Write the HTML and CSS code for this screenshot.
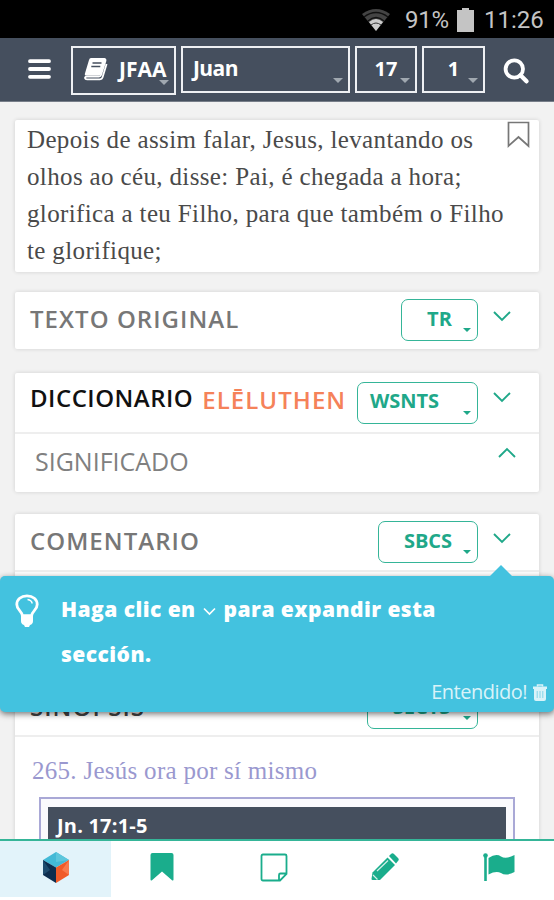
FILE: index.html
```html
<!DOCTYPE html>
<html lang="es">
<head>
    <meta charset="UTF-8">
    <meta name="viewport" content="width=device-width, initial-scale=1.0">
    <title>Juan 17:1</title>
    <link rel="stylesheet" href="styles.css">
</head>
<body>
    <div class="status-bar">
        <svg class="wifi" width="30" height="24" viewBox="0 0 30 24">
            <path d="M1 6Q15 -4 29 6L15 23Z" fill="#444"/>
            <path d="M3 9Q15 0 27 9M7 13Q15 6 23 13" fill="none" stroke="#111" stroke-width="1.3"/>
            <path d="M8 14Q15 8 22 14L15 23Z" fill="#ccc"/>
            <path d="M10 17Q15 13 20 17" fill="none" stroke="#333" stroke-width="1"/>
        </svg>
        <span class="percent">91%</span>
        <svg class="battery" width="17" height="24" viewBox="0 0 17 24">
            <path d="M5 0h7v2h5v22H0V2h5z" fill="#c4c4c4"/>
        </svg>
        <span class="clock">11:26</span>
    </div>

    <header class="toolbar">
        <svg class="menu" width="23" height="20" viewBox="0 0 23 20">
            <path d="M2 2.2h19M2 10h19M2 17.8h19" stroke="#fff" stroke-width="3.8" stroke-linecap="round"/>
        </svg>
        <div class="select version">
            <svg width="25" height="23" viewBox="0 0 25 23">
                <path d="M8 1H21Q23 1 22.4 3L18 17Q17.500 18.500 16 18.500H4Q2 18.500 2 20Q2.300 21.300 4 21.300H17Q19 21.300 19.500 19.500L23.600 6" fill="none" stroke="#fff" stroke-width="1.8"/>
                <path d="M8 0H20.500Q23 0 22.300 2.500L18 16Q17.500 17.500 15.500 17.500H3Q1.500 17.500 1.800 16L6 2Q6.500 0 8 0Z" fill="#fff"/>
                <path d="M9.500 5h9M8.300 8.600h9" stroke="#454f5e" stroke-width="1.5"/>
            </svg>
            <span>JFAA</span>
        </div>
        <div class="select book"><span>Juan</span></div>
        <div class="select chapter"><span>17</span></div>
        <div class="select verse-no"><span>1</span></div>
        <svg class="search" width="27" height="27" viewBox="0 0 27 27">
            <circle cx="11.300" cy="11" r="8.700" fill="none" stroke="#fff" stroke-width="3.800"/>
            <path d="M17.500 17.300l6 6" stroke="#fff" stroke-width="4.400" stroke-linecap="round"/>
        </svg>
    </header>

    <main>
        <section class="card verse">
            <p>Depois de assim falar, Jesus, levantando os<br>
            olhos ao céu, disse: Pai, é chegada a hora;<br>
            glorifica a teu Filho, para que também o Filho<br>
            te glorifique;</p>
            <svg class="ribbon" width="23" height="27" viewBox="0 0 23 27">
                <path d="M1.500 1.500h20v23.500l-10-9-10 9z" fill="none" stroke="#777" stroke-width="1.700"/>
            </svg>
        </section>

        <section class="card original">
            <div class="card-head">
                <h2>TEXTO ORIGINAL</h2>
                <div class="pick tr"><span>TR</span></div>
                <svg class="chev" width="18" height="11" viewBox="0 0 18 11"><path d="M1 1l8 8 8-8"/></svg>
            </div>
        </section>

        <section class="card dictionary">
            <div class="card-head">
                <h2 class="dark">DICCIONARIO</h2>
                <h2 class="word">ELĒLUTHEN</h2>
                <div class="pick wsnts"><span>WSNTS</span></div>
                <svg class="chev" width="18" height="11" viewBox="0 0 18 11"><path d="M1 1l8 8 8-8"/></svg>
            </div>
            <div class="sub-head">
                <h3>SIGNIFICADO</h3>
                <svg class="chev" width="18" height="11" viewBox="0 0 18 11"><path d="M1 10l8-8 8 8"/></svg>
            </div>
        </section>

        <section class="card comment">
            <div class="card-head">
                <h2>COMENTARIO</h2>
                <div class="pick sbcs"><span>SBCS</span></div>
                <svg class="chev" width="18" height="11" viewBox="0 0 18 11"><path d="M1 1l8 8 8-8"/></svg>
            </div>
        </section>

        <section class="card synopsis">
            <div class="card-head">
                <h2>SINOPSIS</h2>
                <div class="pick sects"><span>SECTS</span></div>
            </div>
            <h4>265. Jesús ora por sí mismo</h4>
            <div class="passage">
                <div class="passage-ref">Jn. 17:1-5</div>
            </div>
        </section>
    </main>

    <div class="tip">
        <svg class="bulb" width="24" height="34" viewBox="0 0 24 34">
            <path d="M7.500 22C7 17 1.800 16 1.800 10.500C1.800 5.500 6 1.800 12 1.800S22.200 5.500 22.200 10.500C22.200 16 17 17 16.500 22Z" fill="none" stroke="#fff" stroke-width="2.800"/>
            <path d="M12.500 5.500q4 .5 4.800 4" fill="none" stroke="#fff" stroke-width="1.300"/>
            <path d="M6 20.500h12v6.500q0 3-3 4l-1 2h-4l-1-2q-3-1-3-4z" fill="#fff"/>
        </svg>
        <p>Haga clic en<svg width="13" height="9" viewBox="0 0 13 9"><path d="M1 1.500l5.500 5.500 5.500-5.500" fill="none" stroke="#fff" stroke-width="1.700"/></svg>para expandir esta<br>sección.</p>
        <div class="dismiss">
            <span>Entendido!</span>
            <svg width="14" height="17" viewBox="0 0 14 17">
                <path d="M4.500 2.500V1h5v1.500" fill="none" stroke="#d9f3f9" stroke-width="1.500"/>
                <path d="M0 2.500h14v2.500H0zM1 5h12v10q0 2-2 2H3q-2 0-2-2z" fill="#d9f3f9"/>
                <path d="M4.200 7v7M7 7v7M9.800 7v7" stroke="#84d6e8" stroke-width="1"/>
            </svg>
        </div>
    </div>

    <nav class="tabs">
        <a class="active">
            <svg width="26" height="31" viewBox="0 0 26 31">
                <path d="M13 0L26 8L13 15.500L0 8Z" fill="#43b9d6"/>
                <path d="M13 0L26 8L13 10Z" fill="#5cc6dc"/>
                <path d="M0 8L13 15.500V31L0 23Z" fill="#0d2d4e"/>
                <path d="M0 8L7 18L0 23Z" fill="#1f4c6e"/>
                <path d="M26 8L13 15.500V31L26 23Z" fill="#f05a28"/>
                <path d="M26 8L19 18L26 23Z" fill="#f9794b"/>
            </svg>
        </a>
        <a>
            <svg width="24" height="28" viewBox="0 0 24 28"><path d="M2.500 0h19Q23.500 0 23.500 2v24.500q0 1.500-1.500.8L12 18.500 2 27.300Q.5 28 .5 26.500V2q0-2 2-2z" fill="#1aad8c"/></svg>
        </a>
        <a>
            <svg width="28" height="29" viewBox="0 0 28 29"><path d="M3 1.500h22q1.500 0 1.500 1.500v18l-6.500 6.500H3Q1.500 27.500 1.500 26V3Q1.500 1.500 3 1.500zM19 27v-5q0-1.500 1.500-1.500H26" fill="none" stroke="#1aad8c" stroke-width="1.800"/></svg>
        </a>
        <a>
            <svg width="28" height="29" viewBox="0 0 28 29">
                <path d="M1.500 19.500L16.500 4.500l7.500 7.500L9 27H1.500q-1 0-1-1z" fill="#1aad8c"/>
                <path d="M18 3l2-2q1.500-1.500 3 0L27 5q1.500 1.500 0 3l-2 2.500z" fill="#1aad8c"/>
                <path d="M6 18L17 7.500M2 22l4.500 4.500" stroke="#d5f0e9" stroke-width="1.200"/>
            </svg>
        </a>
        <a>
            <svg width="32" height="29" viewBox="0 0 32 29">
                <circle cx="2.500" cy="2.500" r="2.300" fill="#1aad8c"/>
                <path d="M1.200 3h2.600v25H1.200z" fill="#1aad8c"/>
                <path d="M5.500 5Q13 0 18 3.500Q23 6.500 31.500 2V19Q23 23.500 18 20Q13 17.500 5.500 21.500Z" fill="#1aad8c"/>
            </svg>
        </a>
    </nav>
</body>
</html>
```
FILE: styles.css
```css
* {
    box-sizing: border-box;
}
body {
    position: relative;
    display: flex;
    flex-direction: column;
    width: 554px;
    height: 900px;
    margin: 0;
    overflow: hidden;
    background: #f2f2f2;
    font-family: 'Open Sans', sans-serif;
}
h2, h3, h4, p {
    margin: 0;
    white-space: nowrap;
}
.status-bar {
    flex: none;
    display: flex;
    align-items: center;
    justify-content: flex-end;
    height: 38px;
    padding: 2px 9px 0 0;
    background: #000;
    color: #c4c4c4;
    font: 24px/36px Roboto, sans-serif;
}
.percent {
    margin-left: 14px;
    width: 46px;
    letter-spacing: -.3px;
}
.battery {
    margin: 0 10px 0 6px;
}
.clock {
    width: 61px;
}
.toolbar {
    flex: none;
    display: flex;
    align-items: flex-start;
    height: 64px;
    padding: 8px 0 0 28px;
    background: #454f5e;
    border-bottom: 1px solid #777e89;
    color: #fff;
    font-size: 21px;
    font-weight: 700;
}
.menu {
    margin: 13px 20px 0 0;
}
.select {
    position: relative;
    display: flex;
    align-items: center;
    height: 47px;
    margin-right: 5px;
    padding-bottom: 3px;
    border: 2px solid #eef0f3;
}
.select::after {
    content: "";
    position: absolute;
    right: 5px;
    bottom: 8px;
    border: 5px solid transparent;
    border-top-color: #a0a8b0;
    border-bottom: 0;
}
.version {
    width: 105px;
    height: 49px;
    padding-left: 10px;
    gap: 11px;
}
.book {
    width: 169px;
    padding-left: 10px;
    letter-spacing: -.6px;
}
.chapter {
    width: 62px;
    justify-content: center;
    font-size: 20px;
}
.verse-no {
    width: 63px;
    justify-content: center;
    font-size: 20px;
}
.search {
    margin: 12px 0 0 13px;
}
main {
    flex: 1;
    display: flex;
    flex-direction: column;
    padding: 18px 15px 0;
}
.card {
    flex: none;
    background: #fff;
    border-radius: 2px;
    box-shadow: 0 0 4px rgba(0, 0, 0, .14);
}
.verse {
    position: relative;
    height: 152px;
    margin-bottom: 20px;
    padding: 1px 12px;
    color: #4a4a4a;
    font: 25px/37px 'Liberation Serif', serif;
    letter-spacing: .36px;
}
.ribbon {
    position: absolute;
    top: 1px;
    right: 9px;
}
.original {
    height: 57px;
    margin-bottom: 24px;
}
.dictionary {
    height: 119px;
    margin-bottom: 22px;
}
.comment {
    height: 144px;
    margin-bottom: 22px;
}
.synopsis {
    height: 230px;
}
.card-head {
    display: flex;
    align-items: flex-start;
    height: 57px;
    padding: 7px 28px 0 15px;
}
.dictionary .card-head {
    height: 61px;
    padding-top: 9px;
    border-bottom: 2px solid #eee;
}
.comment .card-head, .synopsis .card-head {
    height: 58px;
    border-bottom: 2px solid #eee;
}
.synopsis .card-head {
    height: 57px;
    padding-right: 61px;
}
h2 {
    color: #777;
    font-size: 24px;
    font-weight: 600;
    line-height: 39px;
    letter-spacing: 1.05px;
}
.synopsis h2 {
    color: #444;
}
.dark {
    color: #111;
    line-height: 32px;
    letter-spacing: .5px;
}
.word {
    margin-left: 9px;
    color: #f58259;
    line-height: 35px;
}
.pick {
    position: relative;
    flex: none;
    height: 42px;
    margin-left: auto;
    border: 1.5px solid #35b598;
    border-radius: 7px;
    color: #1fa889;
    font-size: 20px;
    font-weight: 700;
    line-height: 37px;
    text-align: center;
}
.pick::after {
    content: "";
    position: absolute;
    right: 6px;
    bottom: 8px;
    border: 4.500px solid transparent;
    border-top-color: #1fa889;
    border-bottom: 0;
}
.tr {
    width: 77px;
}
.wsnts {
    width: 121px;
    padding-right: 26px;
    line-height: 35px;
}
.sbcs {
    width: 100px;
}
.sects {
    width: 111px;
    padding-right: 2px;
}
.chev {
    flex: none;
    margin: 12px 0 0 15px;
    fill: none;
    stroke: #1fa889;
    stroke-width: 1.900;
}
.dictionary .card-head .chev {
    margin-top: 10px;
}
.sub-head {
    display: flex;
    justify-content: space-between;
    padding: 1px 23px 0 20px;
}
h3 {
    color: #808080;
    font-size: 25px;
    font-weight: 400;
    line-height: 53px;
}
h4 {
    margin-left: 17px;
    color: #9a98cf;
    font: 25px/68px 'Liberation Serif', serif;
    letter-spacing: .28px;
}
.passage {
    height: 80px;
    margin: -8px 24px 0;
    padding: 8px 7px 0;
    background: #fafafd;
    border: 2px solid #a9a8d6;
}
.passage-ref {
    height: 50px;
    padding-left: 9px;
    background: #454f5e;
    color: #fff;
    font-size: 20px;
    font-weight: 700;
    line-height: 38px;
    letter-spacing: .2px;
}
.tip {
    position: absolute;
    top: 576px;
    left: 0;
    width: 554px;
    height: 136px;
    background: #43c2df;
    border-radius: 5px;
    box-shadow: 0 2px 6px rgba(0, 0, 0, .55);
    color: #fff;
}
.tip::before {
    content: "";
    position: absolute;
    top: -11px;
    left: 489px;
    border: 12px solid transparent;
    border-top: 0;
    border-bottom-color: #43c2df;
}
.bulb {
    position: absolute;
    top: 18px;
    left: 15px;
}
.tip p {
    padding: 11px 0 0 61px;
    font-size: 21px;
    font-weight: 800;
    line-height: 45px;
    letter-spacing: .45px;
}
.tip p svg {
    margin: 0 8px 1px 7px;
}
.dismiss {
    position: absolute;
    right: 7px;
    bottom: 5px;
    display: flex;
    align-items: center;
    gap: 6px;
    color: #d9f3f9;
    font-size: 20px;
    line-height: 30px;
    letter-spacing: -.5px;
}
.tabs {
    position: absolute;
    top: 839px;
    left: 0;
    display: grid;
    grid-template-columns: repeat(5, 1fr);
    width: 554px;
    height: 61px;
    background: #fff;
    border-top: 2px solid #35b598;
    border-bottom: 3px solid #fff;
}
.tabs a {
    display: flex;
    align-items: center;
    justify-content: center;
    padding: 0 5px 4px 0;
}
.tabs .active {
    padding: 0 0 4px 1px;
    background: #e2f3fa;
}
.tabs a:nth-child(2) {
    padding-right: 9px;
}
.tabs a:last-child {
    padding-right: 0;
}
```
